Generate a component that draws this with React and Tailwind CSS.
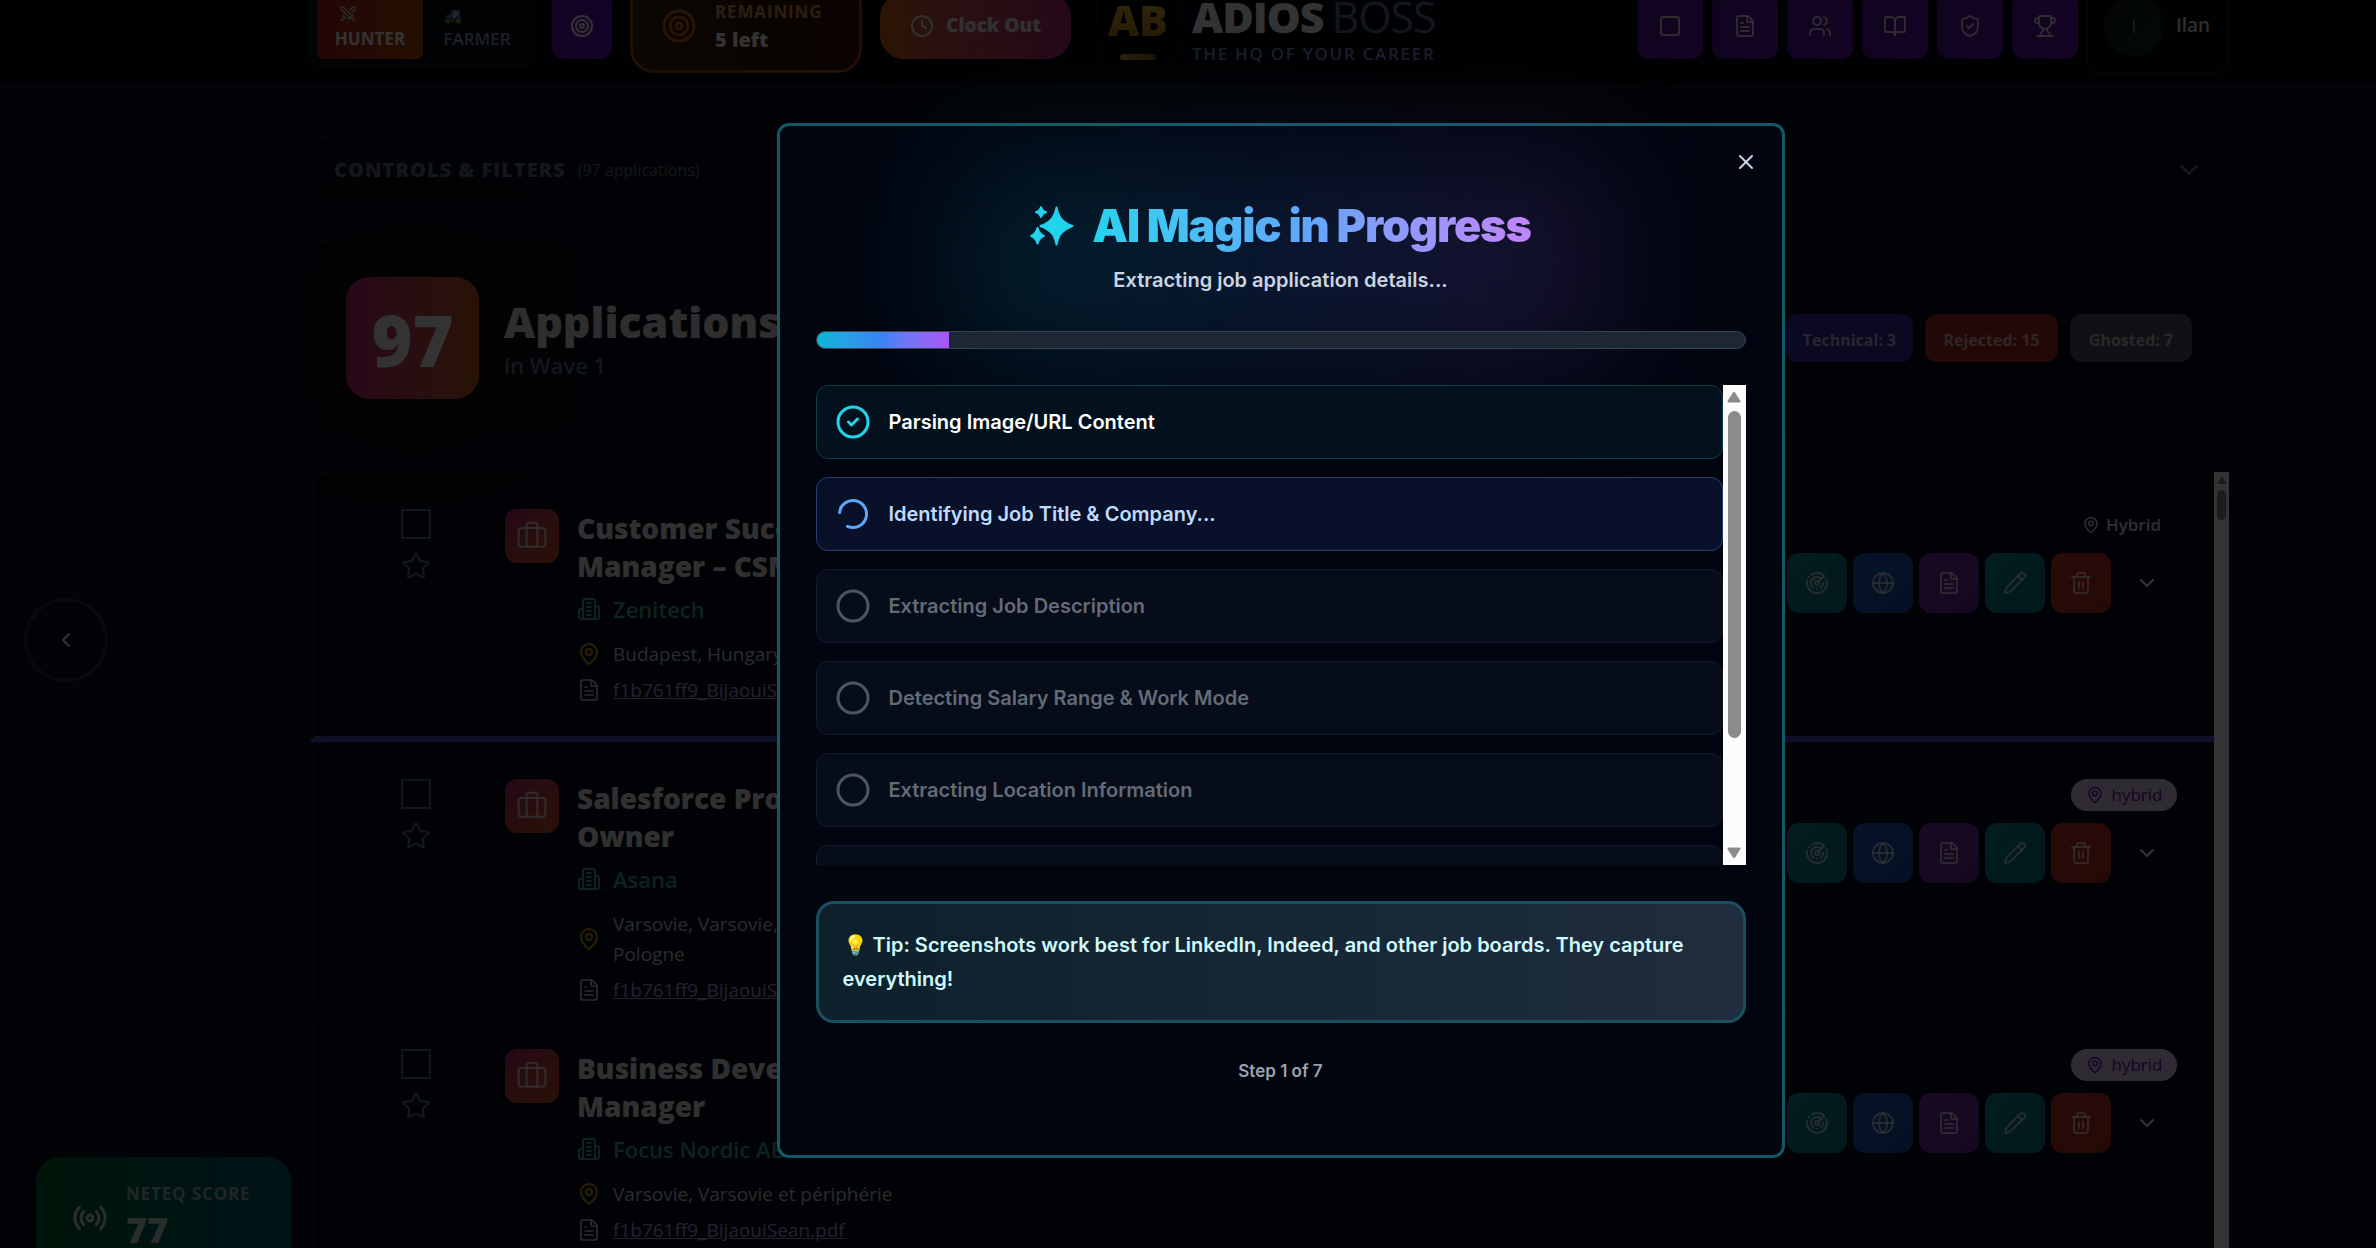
import React from "react";
import {
  BookOpen,
  Briefcase,
  ChevronDown,
  ChevronLeft,
  Circle,
  CircleCheck,
  Clock,
  FileText,
  Globe,
  LoaderCircle,
  MapPin,
  Pencil,
  Radar,
  Radio,
  ShieldCheck,
  Square,
  Star,
  Swords,
  Target,
  Trash2,
  Trophy,
  Users,
  X,
} from "lucide-react";

const NAV = [
  { label: "Board", Icon: Square },
  { label: "Documents", Icon: FileText },
  { label: "Contacts", Icon: Users },
  { label: "Library", Icon: BookOpen },
  { label: "Security", Icon: ShieldCheck },
  { label: "Trophies", Icon: Trophy },
];

const ACTIONS = [
  { label: "Radar", Icon: Radar, color: "from-[#0b8e9c] to-[#0a7a8c]" },
  { label: "Website", Icon: Globe, color: "from-[#1d5fc8] to-[#1a4fae]" },
  { label: "Notes", Icon: FileText, color: "from-[#7e35b8] to-[#6b2aa0]" },
  { label: "Edit", Icon: Pencil, color: "from-[#0b8e9c] to-[#0a7a8c]" },
  { label: "Delete", Icon: Trash2, color: "from-[#cc3a30] to-[#b8301c]" },
];

const JOBS = [
  {
    title: ["Customer Success", "Manager – CSM"],
    company: "Zenitech",
    location: ["Budapest, Hungary"],
    mode: "Hybrid",
    active: true,
  },
  {
    title: ["Salesforce Product", "Owner"],
    company: "Asana",
    location: ["Varsovie, Varsovie,", "Pologne"],
    mode: "hybrid",
  },
  {
    title: ["Business Developer", "Manager"],
    company: "Focus Nordic AB",
    location: ["Varsovie, Varsovie et périphérie"],
    mode: "hybrid",
  },
];

const STEPS = [
  { text: "Parsing Image/URL Content", state: "done" },
  { text: "Identifying Job Title & Company...", state: "active" },
  { text: "Extracting Job Description", state: "todo" },
  { text: "Detecting Salary Range & Work Mode", state: "todo" },
  { text: "Extracting Location Information", state: "todo" },
  { text: "Analyzing Requirements", state: "todo" },
];

function Building({ className }) {
  return (
    <svg viewBox="0 0 24 24" fill="none" stroke="currentColor" strokeWidth="2" strokeLinecap="round" strokeLinejoin="round" className={className}>
      <path d="M6 22V4a2 2 0 0 1 2-2h8a2 2 0 0 1 2 2v18Z" />
      <path d="M6 12H4a2 2 0 0 0-2 2v6a2 2 0 0 0 2 2h2" />
      <path d="M18 9h2a2 2 0 0 1 2 2v9a2 2 0 0 1-2 2h-2" />
      <path d="M10 6h4M10 10h4M10 14h4M10 18h4" />
    </svg>
  );
}

function Sparkles({ className }) {
  return (
    <svg viewBox="0 0 44 40" fill="currentColor" stroke="currentColor" strokeWidth="2" strokeLinejoin="round" className={className}>
      <path d="M26.5 1.5c1.8 9.5 5.500 14.500 16 18.500c-10.500 4-14.200 9-16 18.500c-1.800-9.500-5.500-14.500-16-18.500c10.500-4 14.200-9 16-18.500z" />
      <path d="M11 1.200c.8 2.800 2 4 5 4.900c-3 .9-4.200 2.100-5 4.900c-.8-2.800-2-4-5-4.900c3-.9 4.200-2.100 5-4.900z" />
      <path d="M7.500 22c1 4.200 2.600 6.200 6.300 7.800c-3.700 1.600-5.300 3.600-6.300 7.800c-1-4.200-2.600-6.200-6.300-7.800c3.700-1.600 5.300-3.600 6.300-7.800z" />
    </svg>
  );
}

function Header() {
  return (
    <header className="-mt-[34px] flex h-[120px] items-center border-b border-white/10 bg-[#04050a] pr-[148px] pl-[310px]">
      <div className="flex items-center gap-[18px]">
        <div className="flex h-20 w-56 gap-1 rounded-xl border border-slate-700/60 bg-[#070b12] p-1.5">
          <button type="button" className="flex w-[106px] flex-col items-center justify-end rounded-md bg-gradient-to-r from-[#b01c1c] to-[#b84a0a] pb-2">
            <Swords className="mr-11 mb-1 size-[18px] text-slate-300" />
            <span className="text-[17px] leading-6 font-bold text-white">HUNTER</span>
          </button>
          <button type="button" className="flex flex-1 flex-col items-center justify-end pb-2">
            <span className="mr-12 text-base leading-6 hue-rotate-60">🚜</span>
            <span className="text-[17px] leading-6 font-semibold text-slate-400">FARMER</span>
          </button>
        </div>
        <button type="button" aria-label="Targets" className="flex h-[66px] w-[60px] items-center justify-center rounded-xl bg-gradient-to-r from-purple-800 to-violet-800 text-white">
          <Target className="size-6" />
        </button>
        <div className="flex h-[94px] w-[232px] items-center gap-[18px] rounded-3xl border-3 border-[#b85a18]/80 bg-gradient-to-r from-[#33200a] to-[#331008] pl-7">
          <Target className="size-9 text-[#c8641c]" />
          <div>
            <div className="text-[17px] leading-7 font-bold tracking-wider text-orange-300/80">REMAINING</div>
            <div className="text-xl leading-7 font-extrabold text-white">5 left</div>
          </div>
        </div>
        <button type="button" className="flex h-[66px] w-[191px] items-center justify-center gap-3 rounded-3xl bg-gradient-to-r from-[#d9650c] to-[#b8287a] text-white/90">
          <Clock className="size-6" />
          <span className="text-[19px] font-extrabold">Clock Out</span>
        </button>
      </div>

      <div className="ml-[26px] flex items-center gap-[13px]">
        <div className="flex h-[82px] w-[82px] flex-col items-center justify-end rounded-2xl border border-white/10 bg-black pb-1.5">
          <span className="bg-gradient-to-b from-[#f5c84a] to-[#b8860b] bg-clip-text text-[43px] leading-12 font-extrabold text-transparent">AB</span>
          <span className="mt-2.5 h-1.5 w-9 rounded-sm bg-gradient-to-r from-[#d9a43a] to-[#8a6420]" />
        </div>
        <div className="pt-2">
          <div className="text-[43px] leading-12 tracking-tight whitespace-nowrap">
            <span className="font-extrabold text-white">ADIOS</span>
            <span className="ml-2 font-normal text-slate-500">BOSS</span>
          </div>
          <div className="pt-px text-[17px] leading-6 font-semibold tracking-widest whitespace-nowrap text-indigo-300/80">THE HQ OF YOUR CAREER</div>
        </div>
      </div>

      <nav className="ml-auto flex items-center gap-[9px]">
        {NAV.map(({ label, Icon }) => (
          <button key={label} type="button" aria-label={label} className="flex size-[66px] items-center justify-center rounded-xl bg-gradient-to-r from-violet-900 to-purple-800 text-white/80">
            <Icon className="size-6" />
          </button>
        ))}
        <button type="button" className="flex h-24 w-[141px] items-center gap-3 rounded-xl border border-white/15 pl-4 text-white/90">
          <span className="flex size-[60px] items-center justify-center rounded-full bg-gradient-to-br from-[#14141f] to-[#06302a] text-lg text-white/60">I</span>
          <span className="text-[19px] font-semibold">Ilan</span>
        </button>
      </nav>
    </header>
  );
}

function JobRow({ job, index }) {
  const checkId = `job-${index}`;
  return (
    <li
      className={
        job.active
          ? "flex h-[270px] items-start rounded-t-2xl border-t border-b-6 border-l-6 border-t-white/10 border-b-indigo-500/80 border-l-white/5 pt-9 pl-[86px]"
          : "flex h-[270px] items-start rounded-2xl border-t border-l-6 border-t-white/10 border-l-white/5 pt-9 pl-[86px]"
      }
    >
      <div className="flex w-[30px] flex-col items-center gap-3">
        <input id={checkId} type="checkbox" aria-label={job.title.join(" ")} className="size-[30px] appearance-none border-2 border-slate-500" />
        <button type="button" aria-label="Favourite" className="text-slate-500">
          <Star className="size-[30px]" strokeWidth={1.8} />
        </button>
      </div>
      <div className="ml-[74px] flex size-[54px] shrink-0 items-center justify-center rounded-xl bg-gradient-to-br from-[#c02a6a] to-[#cc540f] text-white/80">
        <Briefcase className="size-8" strokeWidth={1.5} />
      </div>
      <div className="ml-[18px] min-w-0 flex-1">
        <label htmlFor={checkId} className="block text-[28px] leading-[38px] font-extrabold text-white/95">
          {job.title.map((line) => (
            <span key={line} className="block">{line}</span>
          ))}
        </label>
        <div className="mt-1.5 flex items-center gap-3 text-[22px] leading-9 font-semibold text-[#3fae94]">
          <Building className="size-6" />
          {job.company}
        </div>
        <div className="mt-3 flex items-center gap-3 text-[19px] leading-[30px] text-slate-300">
          <MapPin className="size-6 text-[#c8a010]" />
          <div>
            {job.location.map((line) => (
              <span key={line} className="block">{line}</span>
            ))}
          </div>
        </div>
        <div className="mt-1.5 flex items-center gap-3 text-[19px] leading-[30px] text-violet-300/90">
          <FileText className="size-6 text-slate-300" strokeWidth={1.7} />
          <a href="#cv" className="underline">f1b761ff9_BijaouiSean.pdf</a>
        </div>
      </div>
      <div className="mr-[37px] flex flex-col items-end gap-3">
        {job.mode === "Hybrid" ? (
          <span className="mr-4 flex h-8 items-center gap-1.5 text-[17px] font-semibold text-slate-200">
            <MapPin className="size-[18px]" />
            {job.mode}
          </span>
        ) : (
          <span className="flex h-8 w-[106px] items-center justify-center gap-2 rounded-full bg-purple-200 text-[17px] text-purple-800">
            <MapPin className="size-[18px]" />
            {job.mode}
          </span>
        )}
        <div className="flex gap-1.5">
          {ACTIONS.map(({ label, Icon, color }) => (
            <button key={label} type="button" aria-label={label} className={`flex size-[60px] items-center justify-center rounded-xl bg-gradient-to-br text-white/70 ${color}`}>
              <Icon className="size-6" />
            </button>
          ))}
          <button type="button" aria-label="Expand" className="flex size-[60px] items-center justify-center text-white">
            <ChevronDown className="size-6" />
          </button>
        </div>
      </div>
    </li>
  );
}

function StepIcon({ state }) {
  if (state === "done") return <CircleCheck className="size-9 text-[#22d3ee]" />;
  if (state === "active") return <LoaderCircle className="size-9 rotate-[186deg] text-[#60a5fa]" />;
  return <Circle className="size-9 text-[#4b5563]" />;
}

const STEP_STYLES = {
  done: "border-[#0d3b47] bg-[#02111c] text-white",
  active: "border-[#263f73] bg-[#08102a] text-[#bfdbfe]",
  todo: "border-[#151c29] bg-[#060c18] text-[#646b78]",
};

function ProgressDialog() {
  return (
    <div role="dialog" aria-labelledby="dialog-title" className="relative h-[1035px] w-[1008px] rounded-xl border-3 border-[#125866] bg-[#01050f] px-9 pt-[73px] font-[Inter,sans-serif]">
      <div className="pointer-events-none absolute inset-x-44 top-8 h-52 bg-gradient-to-r from-[#06b6d4]/15 via-[#3b82f6]/15 to-[#a855f7]/15 blur-3xl" />
      <button type="button" aria-label="Close" className="absolute top-6 right-6 text-slate-300">
        <X className="size-6" />
      </button>

      <div className="relative text-center">
        <h2 id="dialog-title" className="flex items-center justify-center gap-[18px]">
          <Sparkles className="h-10 w-11 text-[#22d3ee]" />
          <span className="bg-gradient-to-r from-[#22d3ee] via-[#60a5fa] to-[#c084fc] bg-clip-text text-[45px] leading-[54px] font-black tracking-tight text-transparent">
            AI Magic in Progress
          </span>
        </h2>
        <p className="mt-3 text-xl leading-[30px] font-semibold text-[#cbd5e1]">Extracting job application details...</p>
      </div>

      <div className="relative mt-9 h-[18px] overflow-hidden rounded-full border border-[#37424f] bg-[#1d2733]">
        <div className="h-full bg-gradient-to-r from-[#06b6d4] via-[#3b82f6] to-[#a855f7]" style={{ width: `${100 / 7}%` }} />
      </div>

      <div className="relative mt-9 flex h-[480px] overflow-hidden">
        <ol className="flex flex-1 flex-col gap-[18px]">
          {STEPS.map((step) => (
            <li key={step.text} className={`flex h-[74px] shrink-0 items-center gap-[18px] rounded-xl border px-[18px] text-xl font-semibold ${STEP_STYLES[step.state]}`}>
              <StepIcon state={step.state} />
              {step.text}
            </li>
          ))}
        </ol>
        <div className="flex w-[23px] flex-col items-center bg-[#fcfcfc] py-1.5 text-[#8b8b8b]">
          <svg viewBox="0 0 14 12" className="h-3 w-3.5" fill="currentColor"><path d="M6 1.500q1-1.500 2 0l5.500 8.500q.5 1.500-1 1.500h-11q-1.500 0-1-1.500z" /></svg>
          <div className="mt-2 h-[327px] w-[13px] rounded-full bg-current" />
          <svg viewBox="0 0 14 12" className="mt-auto h-3 w-3.5 rotate-180" fill="currentColor"><path d="M6 1.500q1-1.500 2 0l5.500 8.500q.5 1.500-1 1.500h-11q-1.500 0-1-1.500z" /></svg>
        </div>
      </div>

      <div className="mt-9 rounded-[18px] border-3 border-[#18505f] bg-gradient-to-r from-[#0e202c] to-[#1f2d3f] p-6 text-xl leading-[34px] font-semibold text-[#cffafe]">
        💡 Tip: Screenshots work best for LinkedIn, Indeed, and other job boards. They capture everything!
      </div>

      <p className="mt-9 text-center text-[17px] leading-6 font-semibold text-[#9ca3af]">Step 1 of 7</p>
    </div>
  );
}

export default function App() {
  return (
    <div className="relative h-screen overflow-hidden bg-[#0b1020] font-['Open_Sans','Noto_Sans',sans-serif]">
      <Header />

      <main className="mr-[147px] ml-[309px] pt-[49px]">
        <button type="button" className="flex h-[70px] w-full items-center rounded-3xl border border-white/10 bg-black/20 px-6 text-left">
          <span className="text-xl font-extrabold tracking-wider text-slate-500">CONTROLS &amp; FILTERS</span>
          <span className="ml-3 text-base text-slate-500">(97 applications)</span>
          <ChevronDown className="ml-auto size-[30px] text-slate-500" />
        </button>

        <section className="mt-[34px] flex h-[197px] items-center rounded-3xl border border-white/10 bg-black/20 px-9">
          <div className="flex h-[122px] w-[133px] items-center justify-center rounded-3xl bg-gradient-to-r from-[#c82a7c] to-[#c85a0a] pt-1.5 text-[70px] font-extrabold text-white shadow-[0_0_100px_#78350f66]">97</div>
          <div className="ml-[25px] pt-1">
            <h1 className="text-[43px] leading-[50px] font-extrabold text-white/90">Applications</h1>
            <p className="text-[22px] leading-9 font-semibold text-slate-500">in Wave 1</p>
          </div>
          <div className="ml-auto flex gap-3 text-base font-bold text-white/70">
            <span className="flex h-12 w-[127px] items-center justify-center rounded-xl bg-[#392fa8] pt-1">Technical: 3</span>
            <span className="flex h-12 w-[133px] items-center justify-center rounded-xl bg-[#a82a20] pt-1">Rejected: 15</span>
            <span className="flex h-12 w-[122px] items-center justify-center rounded-xl bg-gray-600 pt-1">Ghosted: 7</span>
          </div>
        </section>

        <section className="mt-9 flex">
          <ul className="flex-1 bg-black/20">
            {JOBS.map((job, i) => (
              <JobRow key={job.company} job={job} index={i} />
            ))}
          </ul>
          <div className="flex w-[15px] flex-col items-center gap-1.5 bg-[#fcfcfc] pt-1 text-[#8b8b8b]">
            <svg viewBox="0 0 14 12" className="h-2 w-2.5" fill="currentColor"><path d="M7 0l7 12H0z" /></svg>
            <div className="h-[30px] w-[9px] rounded-full bg-current" />
          </div>
        </section>
      </main>

      <button type="button" aria-label="Previous" className="absolute top-[598px] left-6 flex size-[84px] items-center justify-center rounded-full border-3 border-white/15 text-white">
        <ChevronLeft className="size-6" />
      </button>

      <div className="absolute top-[1157px] left-9 flex h-[122px] w-[255px] items-center gap-[18px] rounded-3xl bg-gradient-to-r from-green-800 to-cyan-800 pl-9 text-white/80">
        <Radio className="size-9" />
        <div>
          <div className="text-[17px] leading-6 font-bold tracking-wider whitespace-nowrap text-white/60">NETEQ SCORE</div>
          <div className="text-4xl leading-12 font-extrabold">77</div>
        </div>
      </div>

      <div className="absolute inset-0 flex items-start justify-center bg-black/80 pt-[123px] pl-[185px]">
        <ProgressDialog />
      </div>
    </div>
  );
}
